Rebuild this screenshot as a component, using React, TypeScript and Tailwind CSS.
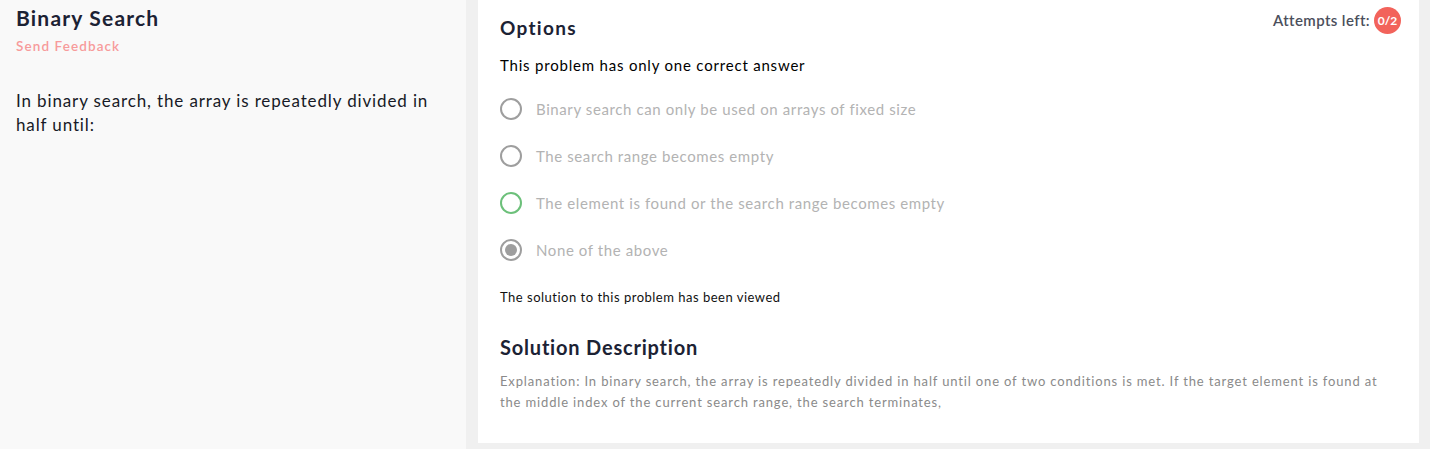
const OPTIONS = [
  { label: "Binary search can only be used on arrays of fixed size", state: "idle" },
  { label: "The search range becomes empty", state: "idle" },
  { label: "The element is found or the search range becomes empty", state: "correct" },
  { label: "None of the above", state: "selected" },
];

function Radio({ state }: { state: string }) {
  if (state === "correct") {
    return <span className="w-[22px] h-[22px] rounded-full border-2 border-[#6cc07a] shrink-0" />;
  }
  if (state === "selected") {
    return (
      <span className="w-[22px] h-[22px] rounded-full border-2 border-[#9e9e9e] shrink-0 flex items-center justify-center">
        <span className="w-[12px] h-[12px] rounded-full bg-[#9e9e9e]" />
      </span>
    );
  }
  return <span className="w-[22px] h-[22px] rounded-full border-2 border-[#9e9e9e] shrink-0" />;
}

export default function App() {
  return (
    <div className="flex w-[1430px] h-[449px] bg-[#f0f0f0] font-['Lato',sans-serif] overflow-hidden">
      <div className="w-[466px] shrink-0 bg-[#f9f9f9] pl-4 pr-6 pt-[4px]">
        <h1 className="text-[21px] leading-[28px] font-bold tracking-[1.2px] text-[#1c2234]">
          Binary Search
        </h1>
        <div className="mt-[4px] text-[13.5px] leading-[20px] font-semibold tracking-[1.1px] text-[#f79b9b]">
          Send Feedback
        </div>
        <p className="mt-[33px] text-[17px] leading-[24px] tracking-[0.87px] text-[#171a26]">
          In binary search, the array is repeatedly divided in half until:
        </p>
      </div>

      <div className="flex-1 pl-3 pr-[11px] pb-[6px]">
        <div className="h-full bg-white px-[22px] pt-[14px]">
          <div className="flex items-start justify-between">
            <h2 className="text-[19px] leading-[28px] font-bold tracking-[1.3px] text-[#1c2234]">
              Options
            </h2>
            <div className="flex items-center gap-[4px] -mt-[7px] -mr-[4px]">
              <span className="text-[15px] font-semibold tracking-[0.4px] text-[#4b4f5c]">
                Attempts left:
              </span>
              <span className="w-[27px] h-[27px] rounded-full bg-[#f2635b] text-white text-[12px] font-bold flex items-center justify-center">
                0/2
              </span>
            </div>
          </div>
          <p className="mt-[13px] text-[15px] leading-[20px] tracking-[0.8px] text-black">
            This problem has only one correct answer
          </p>
          <div className="mt-[23px] flex flex-col gap-[25px]">
            {OPTIONS.map((o) => (
              <div key={o.label} className="flex items-center gap-[14px] h-[22px]">
                <Radio state={o.state} />
                <span className="text-[15px] tracking-[0.6px] text-[#b3b3b3]">{o.label}</span>
              </div>
            ))}
          </div>
          <p className="mt-[26px] text-[13px] leading-[20px] tracking-[0.5px] text-[#111]">
            The solution to this problem has been viewed
          </p>
          <h2 className="mt-[26px] text-[20px] leading-[28px] font-bold tracking-[0.8px] text-[#1c2234]">
            Solution Description
          </h2>
          <p className="mt-[10px] text-[13px] leading-[21px] tracking-[0.85px] text-[#8a8a8a]">
            Explanation: In binary search, the array is repeatedly divided in half until one of two
            conditions is met. If the target element is found at the middle index of the current
            search range, the search terminates,
          </p>
        </div>
      </div>
    </div>
  );
}
